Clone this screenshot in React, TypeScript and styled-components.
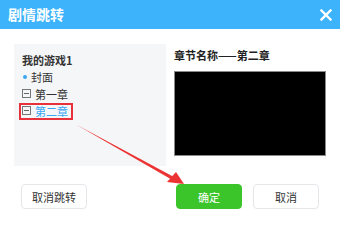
import React from 'react';
import styled, { createGlobalStyle } from 'styled-components';

const GlobalStyle = createGlobalStyle`
  html, body {
    margin: 0;
    padding: 0;
    background: #ffffff;
  }
  body {
    font-family: "Noto Sans CJK SC", "Noto Sans", sans-serif;
  }
`;

const Dialog = styled.div`
  position: relative;
  width: 340px;
  height: 226px;
  background: #ffffff;
  overflow: hidden;
`;

const Header = styled.div`
  height: 29px;
  background: #3db3fc;
  display: flex;
  align-items: center;
  justify-content: space-between;
  padding: 0 8px 0 8px;
`;

const Title = styled.div`
  color: #ffffff;
  font-size: 14px;
  font-weight: 700;
  line-height: 29px;
`;

const CloseButton = styled.div`
  width: 12px;
  height: 12px;
  display: flex;
`;

const Body = styled.div`
  display: flex;
  gap: 8px;
  padding: 15px 14px 0;
`;

const TreePanel = styled.div`
  width: 152px;
  height: 122px;
  background: #f5f6f8;
  padding: 7px 0 0 8px;
  box-sizing: border-box;
`;

const TreeRow = styled.div<{ $active?: boolean; $bold?: boolean }>`
  position: relative;
  display: flex;
  align-items: center;
  gap: 2px;
  height: 17px;
  font-size: 11px;
  font-weight: ${({ $bold }) => ($bold ? 700 : 400)};
  color: ${({ $active }) => ($active ? '#3aa6f4' : '#333333')};
  width: fit-content;

  ${({ $active }) =>
    $active &&
    `
    &::after {
      content: '';
      position: absolute;
      left: -3px;
      top: 1px;
      width: 54px;
      height: 17px;
      box-sizing: border-box;
      border: 2px solid #e8313a;
    }
  `}
`;

const Dot = styled.span`
  width: 4px;
  height: 4px;
  border-radius: 50%;
  background: #3aa6f4;
  margin: 0 2px 0 1px;
`;

const FoldBox = styled.span`
  position: relative;
  width: 7px;
  height: 7px;
  border: 1px solid #777777;
  margin-right: 2px;
  box-sizing: content-box;

  &::before {
    content: '';
    position: absolute;
    left: 1px;
    right: 1px;
    top: 3px;
    height: 1px;
    background: #666666;
  }
`;

const PreviewColumn = styled.div`
  width: 152px;
  display: flex;
  flex-direction: column;
`;

const ChapterName = styled.div`
  font-size: 11px;
  font-weight: 700;
  color: #222222;
  line-height: 14px;
  margin-top: 4px;
  height: 14px;
`;

const PreviewBox = styled.div`
  margin-top: 9px;
  height: 85px;
  background: #000000;
  border: 1px solid #8a8a8a;
  box-sizing: border-box;
`;

const Footer = styled.div`
  display: flex;
  align-items: center;
  padding: 0 21px;
  margin-top: 18px;
  gap: 11px;
`;

const Spacer = styled.div`
  flex: 1;
`;

const Button = styled.button<{ $primary?: boolean }>`
  width: 66px;
  height: 25px;
  padding: 0;
  border-radius: 4px;
  font-family: inherit;
  font-size: 11px;
  cursor: pointer;
  border: 1px solid ${({ $primary }) => ($primary ? '#3cc42b' : '#e4e6ea')};
  background: ${({ $primary }) => ($primary ? '#3cc42b' : '#ffffff')};
  color: ${({ $primary }) => ($primary ? '#ffffff' : '#333333')};
`;

const Arrow = styled.svg`
  position: absolute;
  left: 0;
  top: 0;
  pointer-events: none;
`;

const App: React.FC = () => {
  return (
    <>
      <GlobalStyle />
      <Dialog>
        <Header>
          <Title>剧情跳转</Title>
          <CloseButton>
            <svg width="12" height="12" viewBox="0 0 12 12">
              <path d="M1.5 1.5 L10.5 10.5 M10.5 1.5 L1.5 10.5" stroke="#fff" strokeWidth="2.4" strokeLinecap="square" />
            </svg>
          </CloseButton>
        </Header>

        <Body>
          <TreePanel>
            <TreeRow $bold>我的游戏1</TreeRow>
            <TreeRow>
              <Dot />
              封面
            </TreeRow>
            <TreeRow>
              <FoldBox />
              第一章
            </TreeRow>
            <TreeRow $active>
              <FoldBox />
              第二章
            </TreeRow>
          </TreePanel>

          <PreviewColumn>
            <ChapterName>章节名称——第二章</ChapterName>
            <PreviewBox />
          </PreviewColumn>
        </Body>

        <Footer>
          <Button>取消跳转</Button>
          <Spacer />
          <Button $primary>确定</Button>
          <Button>取消</Button>
        </Footer>

        {/* annotation arrow */}
        <Arrow width="340" height="226" viewBox="0 0 340 226">
          <polygon points="76,124.5 173,176.5 171.5,179.5" fill="#ec3333" />
          <polygon points="184,184 167,182 176,172" fill="#ec3333" />
        </Arrow>
      </Dialog>
    </>
  );
};

export default App;
